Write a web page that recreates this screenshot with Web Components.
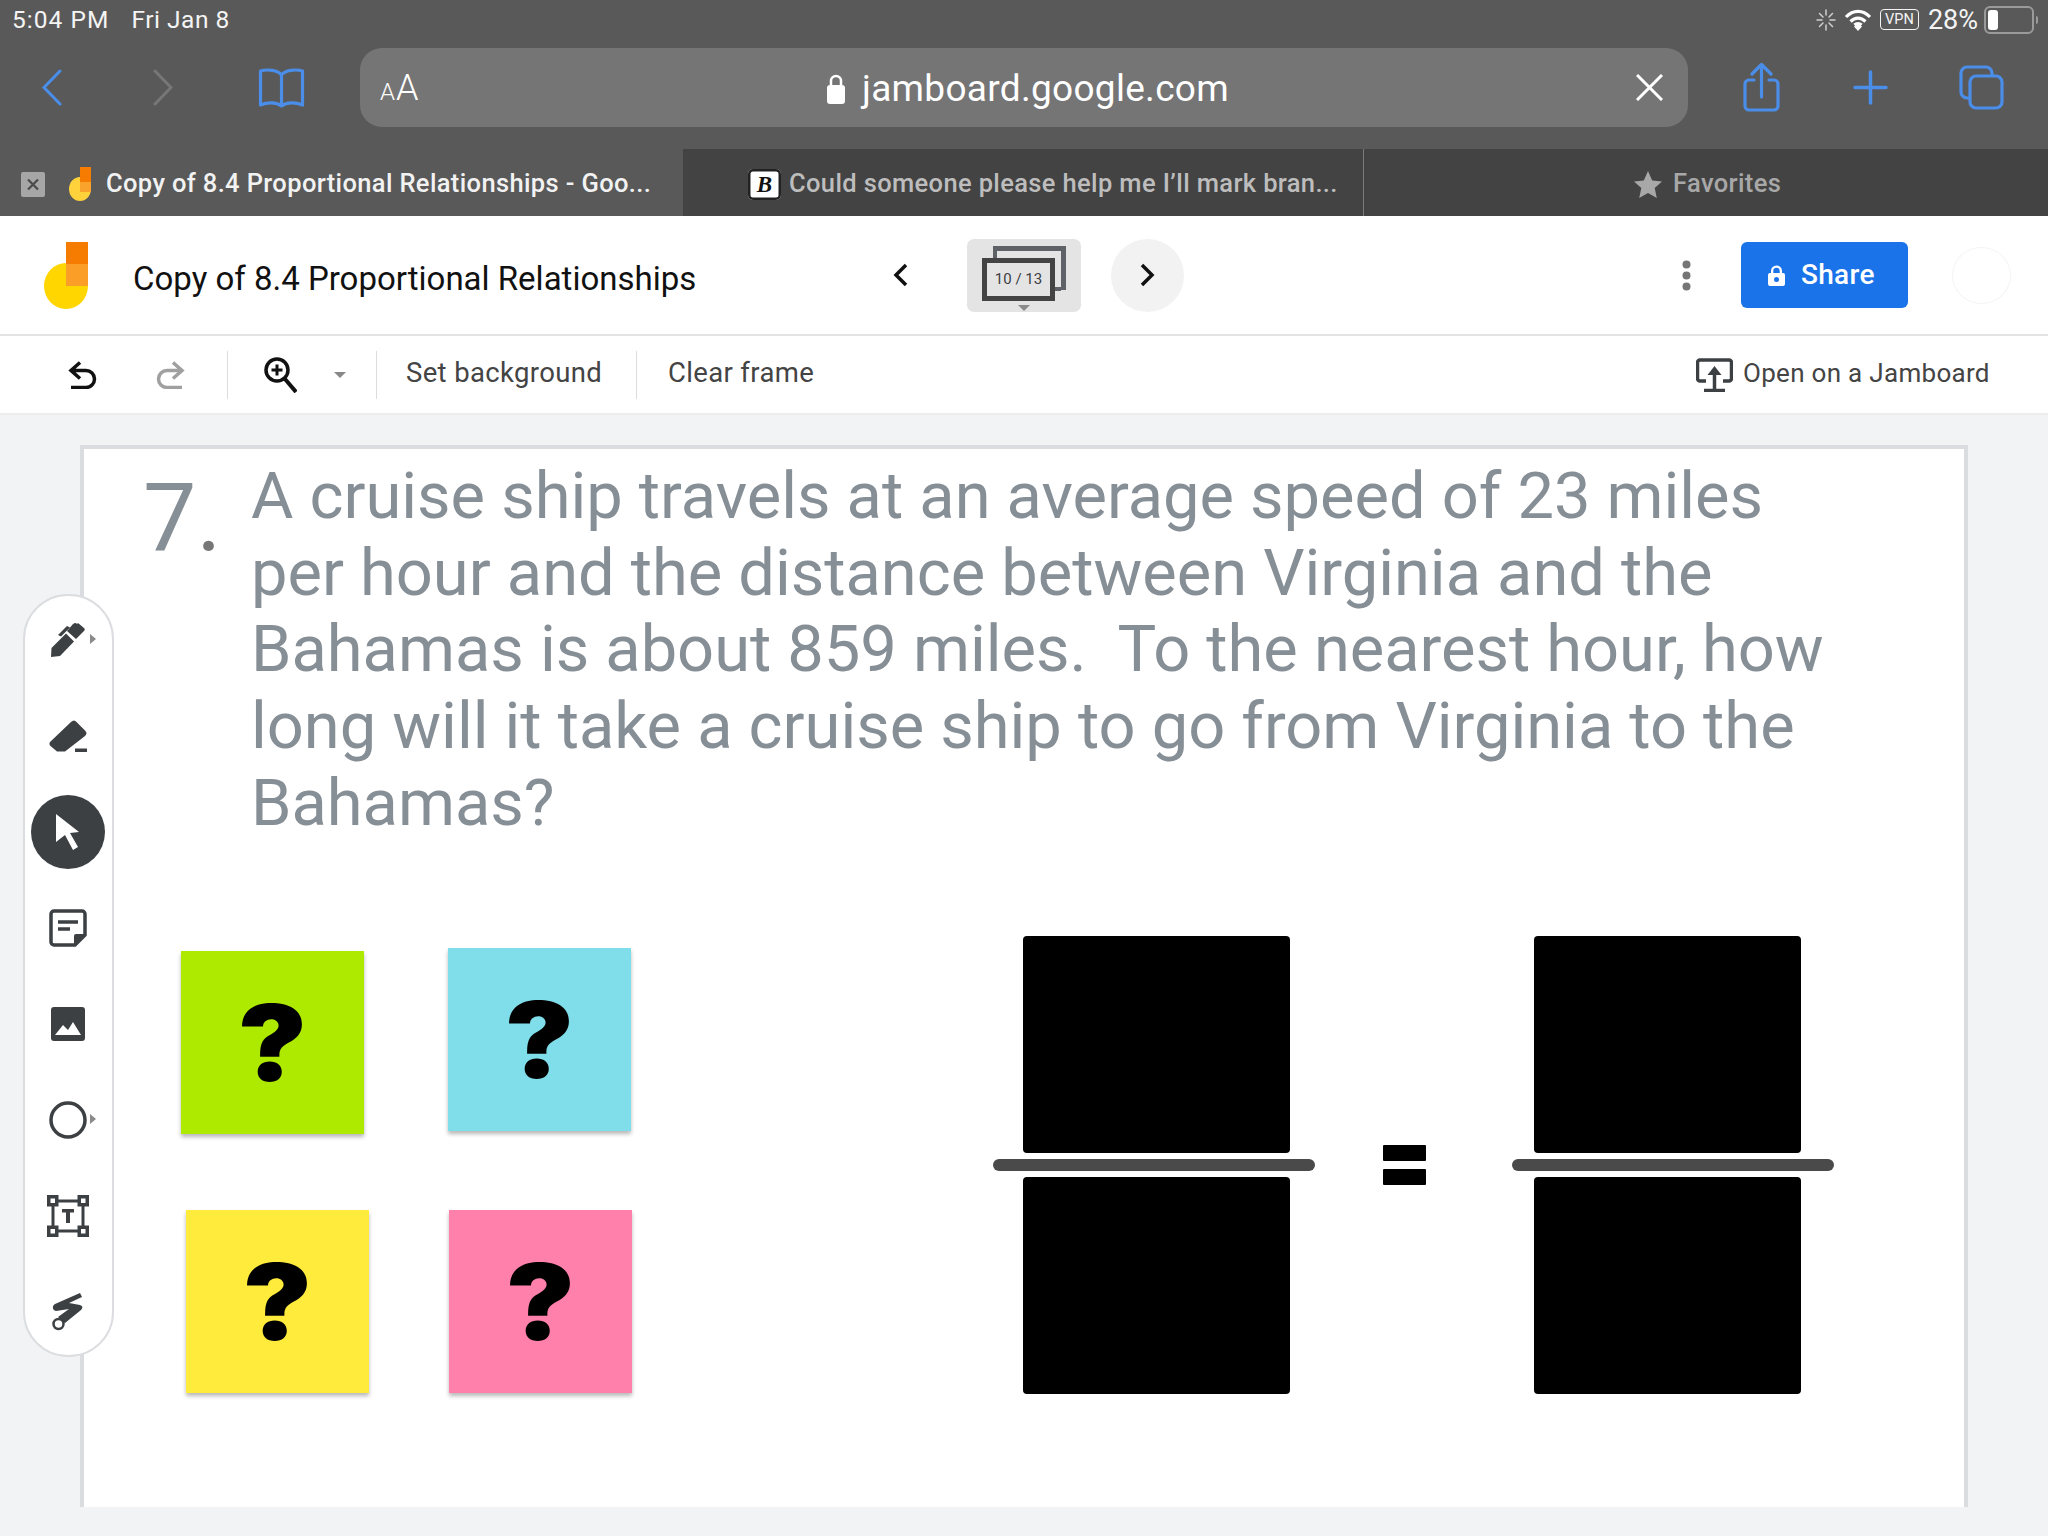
<!DOCTYPE html>
<html lang="en"><head><meta charset="utf-8"><title>Jamboard</title>
<style>
html,body{margin:0;padding:0;width:2048px;height:1536px;overflow:hidden;background:#f1f3f4}
body{display:flex;flex-direction:column;font-family:Roboto,"Liberation Sans",sans-serif}
</style></head><body>
<status-bar></status-bar>
<browser-bar></browser-bar>
<tab-strip>
  <tab-item active style="--w:683px;--pl:21px;--gap:14px">
    <svg slot="lead" width="24" height="25" viewBox="0 0 24 25"><rect width="24" height="25" rx="2" fill="#a6a6a6"/><path d="M7 7.500l10 10M17 7.500l-10 10" stroke="#4a4a4a" stroke-width="2.200"/></svg>
    <svg slot="lead" width="24" height="34" viewBox="0 0 24 34"><ellipse cx="12" cy="22" rx="11" ry="12" fill="#ffd23c"/><rect x="12" y="0" width="11" height="15" fill="#f57c00"/><rect x="12" y="15" width="11" height="10" fill="#f9a32c"/></svg>
    Copy of 8.4 Proportional Relationships - Goo...
  </tab-item>
  <tab-item style="--w:681px;--pl:65px;--gap:8px">
    <brainly-mark slot="lead"></brainly-mark>
    Could someone please help me I’ll mark bran...
  </tab-item>
  <tab-item favorite style="--w:684px;--pl:270px;--gap:11px">
    <svg slot="lead" width="28" height="27" viewBox="0 0 28 27"><path d="M14 0l4.200 9.400 9.800 1-7.300 6.700 2.100 9.900L14 22l-8.800 5 2.100-9.900L0 10.400l9.800-1z" fill="#a8a8a8"/></svg>
    Favorites
  </tab-item>
</tab-strip>
<jam-header></jam-header>
<jam-toolbar></jam-toolbar>
<jam-canvas>
  <jam-slide>
    <question-text></question-text>
    <sticky-note style="--x:97px;--y:502px;--c:#aeea00">?</sticky-note>
    <sticky-note style="--x:364px;--y:499px;--c:#80deea">?</sticky-note>
    <sticky-note style="--x:102px;--y:761px;--c:#ffeb3b">?</sticky-note>
    <sticky-note style="--x:365px;--y:761px;--c:#ff80ab">?</sticky-note>
    <answer-box style="--x:939px;--y:487px;--w:267px;--h:217px"></answer-box>
    <answer-box style="--x:939px;--y:728px;--w:267px;--h:217px"></answer-box>
    <answer-box style="--x:1450px;--y:487px;--w:267px;--h:217px"></answer-box>
    <answer-box style="--x:1450px;--y:728px;--w:267px;--h:217px"></answer-box>
    <answer-box style="--x:909px;--y:710px;--w:322px;--h:12px;--bg:#4a4a4a;--r:6px"></answer-box>
    <answer-box style="--x:1428px;--y:710px;--w:322px;--h:12px;--bg:#4a4a4a;--r:6px"></answer-box>
    <answer-box style="--x:1299px;--y:696px;--w:43px;--h:16px;--r:1px"></answer-box>
    <answer-box style="--x:1299px;--y:720px;--w:43px;--h:16px;--r:1px"></answer-box>
  </jam-slide>
  <tool-rail>
    <tool-btn caret><svg width="36" height="36" viewBox="0 0 36 36"><path d="M1 35l.5-9L16 11.500l8 8L10 34z" fill="#3c4043"/><path d="M8 13l9-9 3 1.500-9 9z" fill="#3c4043"/><path d="M17 9l6-7c2-1.500 3-1.500 4 0l1-1 6 5c1 1 1 2 0 3l-8 8z" fill="#3c4043"/></svg></tool-btn>
    <tool-btn><svg width="38" height="32" viewBox="0 0 38 32"><path d="M1 22L22 2c2-2 4-2 5.500 0l8.500 8.500c2 2 2 3.500 0 5.500L16 31.500H8L1.500 26c-1-1-1.500-2.500-.5-4z" fill="#3c4043"/><rect x="26" y="28.500" width="12" height="3.500" fill="#3c4043"/></svg></tool-btn>
    <tool-btn selected><svg width="24" height="36" viewBox="0 0 24 36"><path d="M0 0l23 18-9 1 8 14-5 3-8-15-9 7z" fill="#fff"/></svg></tool-btn>
    <tool-btn><svg width="38" height="38" viewBox="0 0 38 38"><path d="M5 2h28a3 3 0 0 1 3 3v21L26 36H5a3 3 0 0 1-3-3V5a3 3 0 0 1 3-3z" fill="none" stroke="#3c4043" stroke-width="3.500"/><path d="M25 36V27a2 2 0 0 1 2-2h9z" fill="#3c4043"/><path d="M9 13h20M9 20h12" stroke="#3c4043" stroke-width="3.500"/></svg></tool-btn>
    <tool-btn><svg width="34" height="34" viewBox="0 0 34 34"><rect width="34" height="34" rx="3" fill="#3c4043"/><path d="M4 28l8-10 5 5 5-8 8 13z" fill="#fff"/></svg></tool-btn>
    <tool-btn caret><svg width="38" height="38" viewBox="0 0 38 38"><circle cx="19" cy="19" r="17" fill="none" stroke="#3c4043" stroke-width="3.500"/></svg></tool-btn>
    <tool-btn><svg width="42" height="42" viewBox="0 0 42 42"><rect x="6" y="6" width="30" height="30" fill="none" stroke="#3c4043" stroke-width="3"/><g fill="#fff" stroke="#3c4043" stroke-width="3.500"><rect x="1.750" y="1.750" width="8" height="8"/><rect x="32.250" y="1.750" width="8" height="8"/><rect x="1.750" y="32.250" width="8" height="8"/><rect x="32.250" y="32.250" width="8" height="8"/></g><path d="M15 14h12v3.500h-4V28h-4V17.500h-4z" fill="#3c4043"/></svg></tool-btn>
    <tool-btn><svg width="32" height="38" viewBox="0 0 32 38"><path d="M28 0l2 4-13 6 11 2c3 1 3 3 1 5L13 30 6 24l11-8-13 2c-4-1-4-5-1-7z" fill="#3c4043"/><circle cx="6.500" cy="31" r="5" fill="#fff" stroke="#3c4043" stroke-width="2.500"/></svg></tool-btn>
  </tool-rail>
</jam-canvas>
<script>
const BLUE='#4a8eea';
function def(name,html){
  const t=document.createElement('template');t.innerHTML=html;
  customElements.define(name,class extends HTMLElement{
    constructor(){super();this.attachShadow({mode:'open'}).appendChild(t.content.cloneNode(true));}
  });
}
def('status-bar',`<style>
:host{display:flex;height:48px;flex:none;background:#595959;color:#f4f4f4;font:400 24.500px/30px Roboto,sans-serif;align-items:center;padding:0 10px 9px 12px;box-sizing:border-box;letter-spacing:.5px}
.r{margin-left:auto;display:flex;align-items:center}
.vpn{height:19px;border:1.500px solid #f4f4f4;border-radius:4px;font-size:14.500px;line-height:19px;text-align:center;margin:0 9px 0 8px;letter-spacing:0;box-sizing:content-box;width:37px}
.pct{font-size:27px;letter-spacing:0;margin-right:6px}
.bat{height:20px;border:2px solid #9a9a9a;border-radius:6px;padding:2px;box-sizing:content-box;display:flex;width:42px}
.bat i{display:block;width:10px;background:#fff;border-radius:3px}
.nub{width:2px;height:8px;background:#9a9a9a;margin-left:2px;border-radius:0 2px 2px 0}
</style><span style="letter-spacing:1.050px">5:04 PM</span><span style="margin-left:22px">Fri Jan 8</span>
<span class="r"><svg width="20" height="22" viewBox="0 0 20 22" stroke="#cfcfcf" stroke-width="1.500" stroke-linecap="round"><path d="M10 1v5M10 16v5M1 11h5M14 11h5M3.500 4.500l3.500 3.500M13 14l3.500 3.500M3.500 17.500l3.500-3.500M13 8l3.500-3.500"/></svg>
<svg style="margin-left:8px" width="28" height="22" viewBox="0 0 28 22" fill="none" stroke="#fff" stroke-width="3.200"><path d="M2 8c7-7.500 17-7.500 24 0M6.500 12.500c4.500-4.500 10.500-4.500 15 0M10.500 16c2-2 5-2 7 0"/><path d="M14 22l-4-4.500c2-2 6-2 8 0z" fill="#fff" stroke="none"/></svg>
<span class="vpn">VPN</span><span class="pct">28%</span><span class="bat"><i></i></span><span class="nub"></span></span>`);

def('browser-bar',`<style>
:host{display:flex;flex:none;height:101px;background:#595959;align-items:flex-start;box-sizing:border-box}
.row{display:flex;align-items:center;height:79px}
svg{flex:none;display:block}
.url{width:1328px;height:79px;margin-left:55px;background:#757575;border-radius:22px;display:grid;grid-template-columns:1fr auto 1fr;align-items:center;color:#fff;box-sizing:border-box;padding:0 25px 0 20px}
.aa{font-weight:300;font-size:36px;display:flex;align-items:baseline}.aa small{font-size:24px;margin-right:1px}
.host{display:flex;align-items:center;font-size:37px;margin-left:13px;padding-top:2px;font-weight:400;letter-spacing:.3px}
.x{justify-self:end}
</style><div class="row">
<svg style="margin-left:41px" width="21" height="37" viewBox="0 0 21 37" fill="none" stroke="${BLUE}" stroke-width="3" stroke-linecap="round"><path d="M19 2L3 18.500 19 35"/></svg>
<svg style="margin-left:91px" width="20" height="37" viewBox="0 0 20 37" fill="none" stroke="#777" stroke-width="3" stroke-linecap="round"><path d="M2 2l16 16.500L2 35"/></svg>
<svg style="margin-left:85px" width="47" height="40" viewBox="0 0 47 40" fill="none" stroke="${BLUE}" stroke-width="3.200" stroke-linejoin="round"><path d="M23.500 7C20 2 9 1 2.500 3v34c7-3 16-3 21 1 5-4 14-4 21-1V3C38 1 27 2 23.500 7zM23.500 7v31"/></svg>
<div class="url"><span class="aa"><small>A</small>A</span>
<span class="host"><svg style="margin-right:17px" width="18" height="30" viewBox="0 0 18 30"><rect y="11" width="18" height="19" rx="3" fill="#fff"/><path d="M4 12V7a5 5 0 0 1 10 0v5" fill="none" stroke="#fff" stroke-width="2.500"/></svg>jamboard.google.com</span>
<svg class="x" width="27" height="27" viewBox="0 0 27 27" stroke="#fff" stroke-width="3"><path d="M1 1l25 25M26 1L1 26"/></svg></div>
<svg style="margin-left:55px" width="37" height="49" viewBox="0 0 37 49" fill="none" stroke="${BLUE}" stroke-width="3.200" stroke-linejoin="round" stroke-linecap="round"><path d="M11 17H6a4 4 0 0 0-4 4v22a4 4 0 0 0 4 4h25a4 4 0 0 0 4-4V21a4 4 0 0 0-4-4h-5M18.500 34V2M9 11l9.500-9.500L28 11"/></svg>
<svg style="margin-left:73px" width="35" height="35" viewBox="0 0 35 35" stroke="${BLUE}" stroke-width="3.500" stroke-linecap="round"><path d="M17.500 2v31M2 17.500h31"/></svg>
<svg style="margin-left:71px" width="45" height="45" viewBox="0 0 45 45" fill="none" stroke="${BLUE}" stroke-width="3.200"><rect x="11" y="11" width="32" height="32" rx="6"/><path d="M11 33H8a6 6 0 0 1-6-6V8a6 6 0 0 1 6-6h19a6 6 0 0 1 6 6v3"/></svg>
</div>`);

def('tab-strip',`<style>:host{display:flex;flex:none;height:67px;background:#434343}</style><slot></slot>`);
def('tab-item',`<style>
:host{display:flex;align-items:center;box-sizing:border-box;width:var(--w);height:67px;padding:3px 0 0 var(--pl);gap:var(--gap);color:#bdbdbd;font:500 25.500px/1 Roboto,sans-serif;white-space:nowrap;letter-spacing:.36px}
:host([active]){background:#595959;color:#f2f2f2}
:host(:not([active]):not([favorite])){border-right:1px solid #7a7a7a}
:host([favorite]){color:#a8a8a8}
::slotted(svg){flex:none;display:block}
.l{display:flex;align-items:center;gap:23px}
:host(:not([active])) .l{gap:0}
</style><span class="l"><slot name="lead"></slot></span><span><slot></slot></span>`);
def('brainly-mark',`<style>:host{display:flex;width:33px;height:31px;background:#fff;border-radius:5px;align-items:center;justify-content:center;color:#111;font:italic 900 23px/1 "Liberation Serif",serif;box-shadow:inset 0 0 0 2.500px #222;flex:none}</style>B`);

def('jam-header',`<style>
:host{display:flex;flex:none;align-items:center;height:120px;box-sizing:border-box;background:#fff;border-bottom:2px solid #e3e3e3;position:relative}
svg{display:block;flex:none}
.title{font:400 33px/1 Roboto,sans-serif;color:#111;margin:6px 0 0 45px;width:760px;white-space:nowrap}
.frame{position:relative;width:114px;height:73px;background:#e4e4e4;border-radius:7px;margin-left:59px}
.front{position:absolute;left:15px;top:19px;width:73px;height:43px;border:5px solid #444;box-sizing:border-box;display:flex;align-items:center;justify-content:center;font:400 15px/1 Roboto,sans-serif;color:#3c4043}
.back{position:absolute;left:26px;top:7px;width:73px;height:44px;border:solid #5f6368;border-width:5px 5px 0 0;box-sizing:border-box}
.back:before{content:"";position:absolute;left:0;top:0;width:4px;height:7px;background:#5f6368}
.back:after{content:"";position:absolute;right:0;bottom:-1px;width:7px;height:4px;background:#5f6368}
.tri{position:absolute;left:51px;top:66px;border:6px solid transparent;border-top:6px solid #8a8a8a;border-bottom:0}
.next{width:73px;height:73px;border-radius:50%;background:#f2f2f2;margin-left:30px;display:flex;align-items:center;justify-content:center}
.dots{margin-left:498px}
.share{width:167px;height:66px;margin-left:50px;background:#1a73e8;border-radius:6px;color:#fff;font:500 28px/1 Roboto,sans-serif;display:flex;align-items:center;padding-left:27px;box-sizing:border-box;gap:16px;letter-spacing:.3px}
.av{width:59px;height:57px;border-radius:50%;margin-left:44px;border:1px solid #f4f4f4;box-sizing:border-box}
</style>
<svg style="margin-left:44px" width="44" height="67" viewBox="0 0 44 67"><ellipse cx="22" cy="44" rx="22" ry="23" fill="#ffd600"/><rect x="22" width="22" height="22" fill="#f57c00"/><rect x="22" y="22" width="22" height="22" fill="#fb9e28"/></svg>
<span class="title">Copy of 8.4 Proportional Relationships</span>
<svg width="15" height="24" viewBox="0 0 15 24" fill="none" stroke="#111" stroke-width="3.500"><path d="M13 2L3 12l10 10"/></svg>
<div class="frame"><div class="back"></div><div class="front">10 / 13</div><div class="tri"></div></div>
<div class="next"><svg width="15" height="24" viewBox="0 0 15 24" fill="none" stroke="#111" stroke-width="3.500"><path d="M2 2l10 10L2 22"/></svg></div>
<svg class="dots" width="9" height="31" viewBox="0 0 9 31" fill="#757575"><circle cx="4.500" cy="4.500" r="4"/><circle cx="4.500" cy="15.500" r="4"/><circle cx="4.500" cy="26.500" r="4"/></svg>
<div class="share"><svg width="17" height="21" viewBox="0 0 17 21"><path fill="#fff" fill-rule="evenodd" d="M3 8V6a5.500 5.500 0 0 1 11 0v2h1a2 2 0 0 1 2 2v9a2 2 0 0 1-2 2H2a2 2 0 0 1-2-2v-9a2 2 0 0 1 2-2zm2.300 0h6.400V6a3.200 3.200 0 0 0-6.400 0zM8.500 12a2.500 2.500 0 1 0 0 5 2.500 2.500 0 0 0 0-5z"/></svg>Share</div>
<div class="av"></div>`);

def('jam-toolbar',`<style>
:host{display:flex;flex:none;align-items:center;height:79px;box-sizing:border-box;background:#fff;border-bottom:2px solid #ececec;color:#444;font:400 27.500px/1 Roboto,sans-serif;letter-spacing:.35px;white-space:nowrap}
svg{display:block;flex:none}
.sep{width:1px;height:48px;background:#dadce0;flex:none}
.t{margin-top:-3px}
</style>
<svg style="margin-left:67px" width="30" height="28" viewBox="0 0 30 28" fill="none" stroke="#111" stroke-width="3.500"><path d="M13 1.500L4 9.500l9 8M4 9.500h15a8.500 8.500 0 0 1 0 17H4"/></svg>
<svg style="margin-left:59px" width="30" height="28" viewBox="0 0 30 28" fill="none" stroke="#a0a0a0" stroke-width="3.500"><path d="M17 1.500l9 8-9 8M26 9.500H11a8.500 8.500 0 0 0 0 17h15"/></svg>
<span class="sep" style="margin-left:41px"></span>
<svg style="margin-left:36px" width="33" height="36" viewBox="0 0 33 36" fill="none" stroke="#111" stroke-width="3.500"><circle cx="13" cy="13" r="11"/><path d="M21 22l11 13" stroke-width="4"/><path d="M13 7.500v11M7.500 13h11" stroke-width="3"/></svg>
<svg style="margin-left:37px" width="12" height="6" viewBox="0 0 12 6"><path d="M0 0h12L6 6z" fill="#888"/></svg>
<span class="sep" style="margin-left:30px"></span>
<span class="t" style="margin-left:29px;width:198px">Set background</span>
<span class="sep" style="margin-left:32px"></span>
<span class="t" style="margin-left:31px;width:146px">Clear frame</span>
<svg style="margin-left:882px" width="37" height="34" viewBox="0 0 37 34" fill="none" stroke="#3c4043" stroke-width="3.500"><path d="M10 23H4a2.500 2.500 0 0 1-2.500-2.500v-16A2.500 2.500 0 0 1 4 2h29a2.500 2.500 0 0 1 2.500 2.500v16A2.500 2.500 0 0 1 33 23h-6"/><path d="M18.500 33V16M8 32.500h21" /><path d="M18.500 8l-7 9h14z" fill="#3c4043" stroke="none"/></svg>
<span class="t" style="margin-left:10px;letter-spacing:.3px;font-size:26px">Open on a Jamboard</span>`);

def('jam-canvas',`<style>:host{display:block;flex:1;position:relative;background:#f1f3f4;padding:30px 0 0 80px;box-sizing:border-box;min-height:0}</style><slot></slot>`);
def('jam-slide',`<style>:host{display:block;position:relative;width:1888px;height:1062px;background:#fff;border:solid #dadce0;border-width:4px 4px 0 4px;box-sizing:border-box}</style><slot></slot>`);
def('question-text',`<style>
:host{display:block;position:absolute;left:0;top:0;color:#868e96;font-family:Roboto,sans-serif}
.n{position:absolute;left:59px;top:21px;font-size:95px;line-height:95px}.n span{color:#777}
.q{position:absolute;left:167px;top:9.300px;font-size:65px;line-height:76.600px;white-space:pre;letter-spacing:-.02px}
</style><div class="n">7<span>.</span></div><div class="q">A cruise ship travels at an average speed of 23 miles
per hour and the distance between Virginia and the
Bahamas is about 859 miles.  To the nearest hour, how
long will it take a cruise ship to go from Virginia to the
Bahamas?</div>`);
def('sticky-note',`<style>
:host{position:absolute;left:var(--x);top:var(--y);width:183px;height:183px;background:var(--c);box-shadow:0 3px 4px rgba(0,0,0,.28);display:flex;align-items:center;justify-content:center;color:#000;font:900 106px/1 Inter,"Liberation Sans",sans-serif}
span{transform:translateX(-.5px) scaleX(1.09)}
</style><span><slot></slot></span>`);
def('answer-box',`<style>:host{position:absolute;display:block;left:var(--x);top:var(--y);width:var(--w);height:var(--h);background:var(--bg,#000);border-radius:var(--r,4px)}</style>`);
def('tool-rail',`<style>:host{position:absolute;left:23px;top:179px;width:91px;height:763px;box-sizing:border-box;background:#fff;border:2px solid #dcdde0;border-radius:45px;display:flex;flex-direction:column;padding:0 2px 0 0;align-items:center;justify-content:center}</style><slot></slot>`);
def('tool-btn',`<style>
:host{position:relative;width:74px;height:96px;flex:none;display:flex;align-items:center;justify-content:center}
.sel{display:none;position:absolute;left:0;top:11px;width:74px;height:74px;border-radius:50%;background:#3c4043}
:host([selected]) .sel{display:block}
.c{display:none;position:absolute;left:71px;top:42px;margin-left:-12px;border:solid transparent;border-width:5px 0 5px 6px;border-left-color:#8a8a8a}
:host([caret]) .c{display:block}
.i{position:relative;display:flex}
</style><span class="sel"></span><span class="i"><slot></slot></span><span class="c"></span>`);
</script>
</body></html>
